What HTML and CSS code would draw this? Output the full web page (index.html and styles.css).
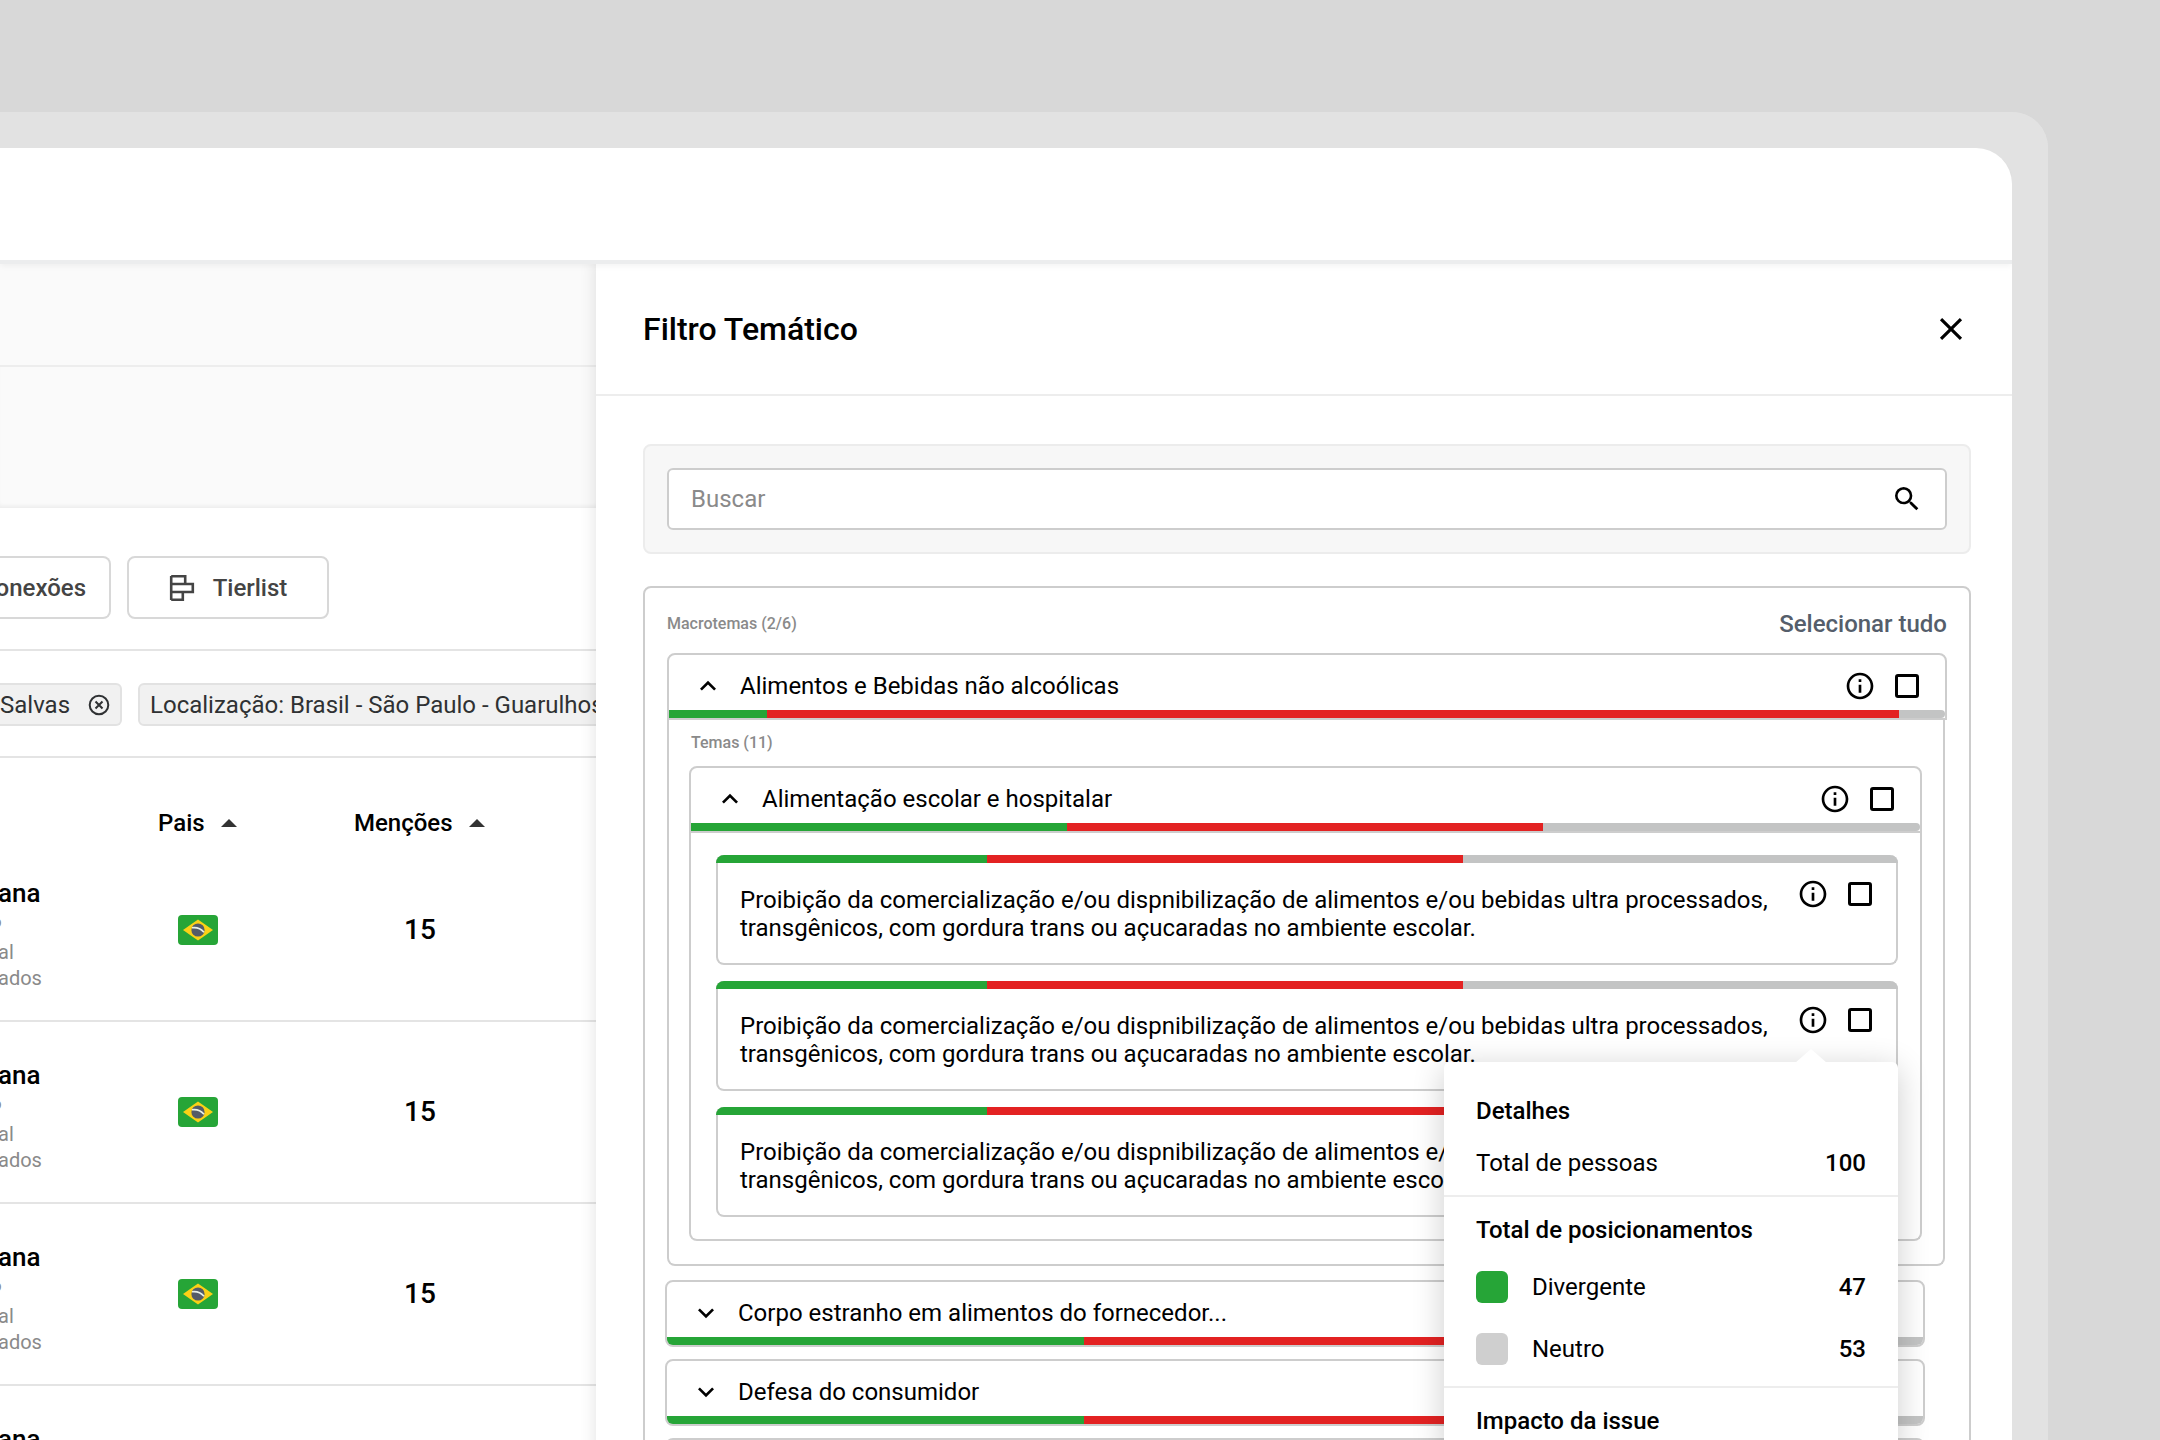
FILE: index.html
```html
<!DOCTYPE html>
<html lang="pt-BR">
<head>
<meta charset="utf-8">
<meta name="viewport" content="width=device-width, initial-scale=1">
<title>Filtro Temático</title>
<link rel="stylesheet" href="styles.css">
</head>
<body>
<svg class="sprite" aria-hidden="true">
  <symbol id="i-close" viewBox="0 0 24 24"><path d="M19 6.41 17.59 5 12 10.59 6.41 5 5 6.41 10.59 12 5 17.59 6.41 19 12 13.41 17.59 19 19 17.59 13.41 12z"/></symbol>
  <symbol id="i-search" viewBox="0 0 24 24"><path d="M15.5 14h-.79l-.28-.27A6.471 6.471 0 0 0 16 9.5 6.5 6.5 0 1 0 9.5 16c1.61 0 3.09-.59 4.23-1.57l.27.28v.79l5 4.99L20.49 19l-4.99-5zm-6 0C7.01 14 5 11.99 5 9.5S7.01 5 9.5 5 14 7.01 14 9.5 11.99 14 9.5 14z"/></symbol>
  <symbol id="i-up" viewBox="0 0 24 24"><path d="m12 8-6 6 1.41 1.41L12 10.83l4.59 4.58L18 14z"/></symbol>
  <symbol id="i-down" viewBox="0 0 24 24"><path d="M16.59 8.59 12 13.17 7.41 8.59 6 10l6 6 6-6z"/></symbol>
  <symbol id="i-info" viewBox="0 0 24 24"><path d="M11 7h2v2h-2zm0 4h2v6h-2zm1-9C6.48 2 2 6.48 2 12s4.48 10 10 10 10-4.480 10-10S17.520 2 12 2zm0 18c-4.410 0-8-3.590-8-8s3.590-8 8-8 8 3.590 8 8-3.590 8-8 8z"/></symbol>
  <symbol id="i-remove" viewBox="0 0 22 22"><g fill="none" stroke="currentColor" stroke-width="2"><circle cx="11" cy="11" r="9.300"/><path d="m7.500 7.500 7 7m0-7-7 7"/></g></symbol>
  <symbol id="i-tier" viewBox="0 0 26 28"><g fill="none" stroke="currentColor" stroke-width="2.600"><path d="M2.200 2v24M2.200 2.200h14v7.800h-14M2.200 10h21.600v8H2.200M2.200 18h11.600v7.800H2.200"/></g></symbol>
  <symbol id="i-flag" viewBox="0 0 40 30"><rect width="40" height="30" rx="4" fill="#26a537"/><path d="M20 4.500 35 15 20 25.500 5 15z" fill="#fbd116"/><circle cx="20" cy="15" r="6.600" fill="#545b68"/><path d="M14 12.800c4.500-.6 9 1 12 4.500" fill="none" stroke="#e8f0e8" stroke-width="1.600"/></symbol>
</svg>

<div class="device">
  <header class="topbar"></header>
  <div class="app">
    <main class="workspace">
      <div class="band band-nav"></div>
      <div class="band band-title"></div>
      <div class="views">
        <button class="view view-cut" type="button">onexões</button>
        <button class="view" type="button"><svg class="tier"><use href="#i-tier"/></svg>Tierlist</button>
      </div>
      <div class="chips">
        <span class="chip chip-cut">Salvas<button class="remove" type="button" aria-label="Remover"><svg><use href="#i-remove"/></svg></button></span>
        <span class="chip">Localização: Brasil - São Paulo - Guarulhos</span>
      </div>
      <table class="people">
        <thead>
          <tr><th class="col-name"></th><th class="col-country"><button class="sort" type="button">Pais<i></i></button></th><th><button class="sort" type="button">Menções<i></i></button></th></tr>
        </thead>
        <tbody>
          <tr><td><strong>ana</strong><small class="party">P</small><small>al</small><small>ados</small></td><td><svg class="flag" role="img" aria-label="Brasil"><use href="#i-flag"/></svg></td><td class="mentions">15</td></tr>
          <tr><td><strong>ana</strong><small class="party">P</small><small>al</small><small>ados</small></td><td><svg class="flag" role="img" aria-label="Brasil"><use href="#i-flag"/></svg></td><td class="mentions">15</td></tr>
          <tr><td><strong>ana</strong><small class="party">P</small><small>al</small><small>ados</small></td><td><svg class="flag" role="img" aria-label="Brasil"><use href="#i-flag"/></svg></td><td class="mentions">15</td></tr>
          <tr><td><strong>ana</strong></td><td></td><td></td></tr>
        </tbody>
      </table>
    </main>

    <aside class="drawer">
      <div class="drawer-head">
        <h1>Filtro Temático</h1>
        <button class="close" type="button" aria-label="Fechar"><svg><use href="#i-close"/></svg></button>
      </div>
      <div class="drawer-body">
        <form class="search">
          <label class="field"><input type="search" placeholder="Buscar" aria-label="Buscar"><svg class="icon"><use href="#i-search"/></svg></label>
        </form>

        <section class="panel">
          <div class="panel-head"><span class="caption">Macrotemas (2/6)</span><a class="select-all" href="#tudo">Selecionar tudo</a></div>

          <div class="macro">
            <div class="card-head">
              <div class="card-row">
                <button class="toggle" type="button"><svg class="icon"><use href="#i-up"/></svg>Alimentos e Bebidas não alcoólicas</button>
                <button class="info" type="button" aria-label="Detalhes"><svg class="icon"><use href="#i-info"/></svg></button>
                <input class="check" type="checkbox" aria-label="Alimentos e Bebidas não alcoólicas">
              </div>
              <div class="bar"><i class="pos" style="width:7.7%"></i><i class="neg" style="width:88.7%"></i></div>
            </div>
            <div class="macro-body">
              <span class="caption theme-count">Temas (11)</span>
              <div class="card-head">
                <div class="card-row">
                  <button class="toggle" type="button"><svg class="icon"><use href="#i-up"/></svg>Alimentação escolar e hospitalar</button>
                  <button class="info" type="button" aria-label="Detalhes"><svg class="icon"><use href="#i-info"/></svg></button>
                  <input class="check" type="checkbox" aria-label="Alimentação escolar e hospitalar">
                </div>
                <div class="bar"><i class="pos" style="width:30.6%"></i><i class="neg" style="width:38.7%"></i></div>
              </div>
              <div class="theme-body">
                <article class="issue">
                  <div class="bar"><i class="pos" style="width:22.9%"></i><i class="neg" style="width:40.3%"></i></div>
                  <div class="issue-row">
                    <p>Proibição da comercialização e/ou dispnibilização de alimentos e/ou bebidas ultra processados, transgênicos, com gordura trans ou açucaradas no ambiente escolar.</p>
                    <button class="info" type="button" aria-label="Detalhes"><svg class="icon"><use href="#i-info"/></svg></button>
                    <input class="check" type="checkbox" aria-label="Selecionar issue">
                  </div>
                </article>
                <article class="issue">
                  <div class="bar"><i class="pos" style="width:22.9%"></i><i class="neg" style="width:40.3%"></i></div>
                  <div class="issue-row">
                    <p>Proibição da comercialização e/ou dispnibilização de alimentos e/ou bebidas ultra processados, transgênicos, com gordura trans ou açucaradas no ambiente escolar.</p>
                    <button class="info" type="button" aria-label="Detalhes"><svg class="icon"><use href="#i-info"/></svg></button>
                    <input class="check" type="checkbox" aria-label="Selecionar issue">
                  </div>
                  <div class="popover" role="tooltip">
                    <section>
                      <h2>Detalhes</h2>
                      <div class="stat"><span>Total de pessoas</span><b>100</b></div>
                    </section>
                    <section>
                      <h2>Total de posicionamentos</h2>
                      <div class="stat stat-key"><i class="swatch pos"></i><span>Divergente</span><b>47</b></div>
                      <div class="stat stat-key"><i class="swatch neutral"></i><span>Neutro</span><b>53</b></div>
                    </section>
                    <section>
                      <h2>Impacto da issue</h2>
                    </section>
                  </div>
                </article>
                <article class="issue">
                  <div class="bar"><i class="pos" style="width:22.9%"></i><i class="neg" style="width:40.3%"></i></div>
                  <div class="issue-row">
                    <p>Proibição da comercialização e/ou dispnibilização de alimentos e/ou bebidas ultra processados, transgênicos, com gordura trans ou açucaradas no ambiente escolar.</p>
                    <button class="info" type="button" aria-label="Detalhes"><svg class="icon"><use href="#i-info"/></svg></button>
                    <input class="check" type="checkbox" aria-label="Selecionar issue">
                  </div>
                </article>
              </div>
            </div>
          </div>

          <div class="closed">
            <div class="card-head">
              <div class="card-row">
                <button class="toggle" type="button"><svg class="icon"><use href="#i-down"/></svg>Corpo estranho em alimentos do fornecedor...</button>
              </div>
              <div class="bar"><i class="pos" style="width:33.2%"></i><i class="neg" style="width:40%"></i></div>
            </div>
            <div class="card-head">
              <div class="card-row">
                <button class="toggle" type="button"><svg class="icon"><use href="#i-down"/></svg>Defesa do consumidor</button>
              </div>
              <div class="bar"><i class="pos" style="width:33.2%"></i><i class="neg" style="width:40%"></i></div>
            </div>
            <div class="card-head">
              <div class="card-row"></div>
            </div>
          </div>
        </section>
      </div>
    </aside>
  </div>
</div>
</body>
</html>
```
FILE: styles.css
```css
:root {
  --line: #cdcdcd;
  --green: #26a537;
  --red: #e32222;
  --grey: #c3c4c4;
}

* { box-sizing: border-box; }

body {
  margin: 0;
  height: 100vh;
  overflow: hidden;
  background: #d8d8d8;
  color: #000;
  font: 400 24px/28px Roboto, sans-serif;
}

button, input { font: inherit; color: inherit; }
button { padding: 0; border: 0; background: none; }
svg { display: block; flex: none; fill: currentColor; }
.sprite { position: absolute; width: 0; height: 0; }
.icon { width: 32px; height: 32px; }

.device {
  display: flex;
  flex-direction: column;
  min-height: 100vh;
  margin: 112px 112px 0 0;
  border: solid #e2e2e2;
  border-width: 36px 36px 0 0;
  border-radius: 0 36px 0 0;
  background: #e2e2e2;
}

.topbar {
  position: relative;
  z-index: 2;
  height: 112px;
  border-radius: 0 36px 0 0;
  background: #fff;
  box-shadow: 0 4px 0 #ecedee, 0 6px 6px rgba(0, 0, 0, .05);
  clip-path: inset(0 0 -16px 0);
}

.app {
  flex: 1;
  display: grid;
  grid-template-columns: 596fr 1416fr;
  overflow: hidden;
  background: #fff;
}

/* Workspace */
.workspace { min-width: 0; overflow: hidden; }
.band { background: #fafafa; }
.band-nav { height: 107px; border-bottom: 2px solid #ededed; }
.band-title { height: 141px; box-shadow: inset 0 -4px 4px -2px rgba(0, 0, 0, .06); }

.views {
  display: flex;
  gap: 16px;
  padding: 48px 0 30px;
  border-bottom: 2px solid #e4e4e4;
}

.view {
  display: flex;
  align-items: center;
  justify-content: center;
  gap: 18px;
  width: 202px;
  height: 63px;
  border: 2px solid #d8d8d8;
  border-radius: 8px;
  background: #fff;
  color: #444;
  font-weight: 500;
}

.view-cut {
  justify-content: flex-end;
  width: 111px;
  padding-right: 23px;
  border-left: 0;
  border-radius: 0 8px 8px 0;
}

.tier { width: 26px; height: 28px; }

.chips {
  display: flex;
  gap: 16px;
  padding: 32px 0 30px;
  border-bottom: 2px solid #e4e4e4;
}

.chip {
  display: flex;
  align-items: center;
  flex: none;
  gap: 18px;
  height: 43px;
  padding: 0 10px;
  border: 2px solid #e2e2e2;
  border-radius: 6px;
  background: #f1f1f1;
  color: #2f3133;
  white-space: nowrap;
}

.chip-cut { padding-left: 0; border-left: 0; border-radius: 0 6px 6px 0; }
.remove svg { width: 22px; height: 22px; }

.people { width: calc(100% + 2px); margin-left: -2px; border-spacing: 0; table-layout: fixed; }
.people th { height: 82px; padding: 51px 0 0; text-align: left; font-weight: 500; vertical-align: top; }
.people td { height: 182px; padding: 38px 0 0; border-bottom: 2px solid #e4e4e4; vertical-align: top; }
.people .col-name { width: 160px; }
.people .col-country { width: 196px; }

.sort { display: flex; align-items: center; gap: 16px; font-weight: 500; }
.sort i { border: 8px solid transparent; border-top: 0; border-bottom: 8px solid #333; }

.people strong, .people small { display: block; }
.people strong { margin-bottom: 5px; font-size: 26px; font-weight: 500; line-height: 30px; }
.people small { color: #8a8a8a; font-size: 20px; line-height: 26px; }
.people .party { text-indent: -9px; }
.people .mentions { padding: 76px 0 0 50px; font-size: 28px; font-weight: 500; }
.flag { width: 40px; height: 30px; margin: 37px 0 0 20px; }

/* Drawer */
.drawer {
  position: relative;
  z-index: 1;
  min-width: 0;
  background: #fff;
  box-shadow: 0 0 16px rgba(0, 0, 0, .12);
}

.drawer-head {
  display: flex;
  align-items: center;
  justify-content: space-between;
  height: 136px;
  padding: 4px 42px 0 47px;
  border-bottom: 2px solid #ededed;
}

h1 { margin: 0; font-size: 32px; font-weight: 500; line-height: 36px; }
.close svg { width: 38px; height: 38px; }
.drawer-body { padding: 48px 41px 0 47px; }

.search {
  margin-bottom: 32px;
  padding: 22px;
  border: 2px solid #ececec;
  border-radius: 8px;
  background: #f7f7f7;
}

.field {
  display: flex;
  align-items: center;
  height: 62px;
  padding: 0 22px;
  border: 2px solid var(--line);
  border-radius: 6px;
  background: #fff;
}

.field input { flex: 1; min-width: 0; padding: 0; border: 0; outline: 0; background: none; }
.field input::placeholder { color: #8a8a8a; opacity: 1; }

.panel {
  padding: 22px;
  border: 2px solid var(--line);
  border-radius: 8px;
}

.panel-head { display: flex; align-items: center; justify-content: space-between; margin-bottom: 15px; }
.caption { color: #8a8a8a; font-size: 16px; font-weight: 500; line-height: 20px; }
.select-all { color: #555e6b; font-weight: 500; text-decoration: none; }

.card-head { border: 2px solid var(--line); border-radius: 8px 8px 0 0; }

.card-row {
  display: flex;
  align-items: center;
  gap: 15px;
  padding: 15px 22px 8px 23px;
}

.toggle { display: flex; flex: 1; align-items: center; gap: 16px; }

.check {
  appearance: none;
  flex: none;
  width: 24px;
  height: 24px;
  margin: 4px;
  border: 3px solid #000;
  border-radius: 3px;
}

.bar { display: flex; height: 8px; overflow: hidden; border-radius: 0 4px 4px 0; background: var(--grey); }
.pos { background: var(--green); }
.neg { background: var(--red); }
.neutral { background: #cfcfcf; }

.macro { margin-bottom: 14px; }

.macro-body {
  margin-right: 2px;
  padding: 13px 21px 23px 20px;
  border: solid var(--line);
  border-width: 0 2px 2px;
  border-radius: 0 0 8px 8px;
}

.theme-count { display: block; margin: 0 0 13px 2px; }

.theme-body {
  display: grid;
  gap: 16px;
  padding: 22px 22px 22px 25px;
  border: solid var(--line);
  border-width: 0 2px 2px;
  border-radius: 0 0 8px 8px;
}

.issue {
  position: relative;
  border: solid var(--line);
  border-width: 0 2px 2px;
  border-radius: 8px;
}

.issue .bar { margin: 0 -2px; border-radius: 8px 8px 0 0; }
.issue-row { display: flex; align-items: flex-start; gap: 15px; padding: 15px 20px 21px 22px; }
.issue p { flex: 1; margin: 8px 0 0; }

.closed { display: grid; gap: 12px; margin: 0 22px 0 -2px; }
.closed .card-head { border-radius: 8px; }
.closed .bar { border-radius: 0 0 6px 6px; }
.closed .card-row { min-height: 55px; }

/* Issue details */
.popover {
  position: absolute;
  z-index: 3;
  top: 81px;
  right: -2px;
  width: 454px;
  border-radius: 6px;
  background: #fff;
  box-shadow: 0 6px 32px rgba(0, 0, 0, .2);
}

.popover::before {
  content: "";
  position: absolute;
  top: -13px;
  right: 71px;
  border: 16px solid transparent;
  border-top: 0;
  border-bottom: 14px solid #fff;
}

.popover section { padding: 19px 32px 18px; border-bottom: 2px solid #ededed; }
.popover section:first-child { padding-top: 35px; }
.popover section:last-child { border-bottom: 0; }
.popover h2 { margin: 0; font-size: 24px; font-weight: 500; line-height: 28px; }
.stat { display: flex; align-items: center; margin-top: 24px; }
.stat-key { min-height: 38px; }
.stat span { flex: 1; }
.stat b { font-weight: 500; }
.swatch { width: 32px; height: 32px; margin-right: 24px; border-radius: 6px; }
```
